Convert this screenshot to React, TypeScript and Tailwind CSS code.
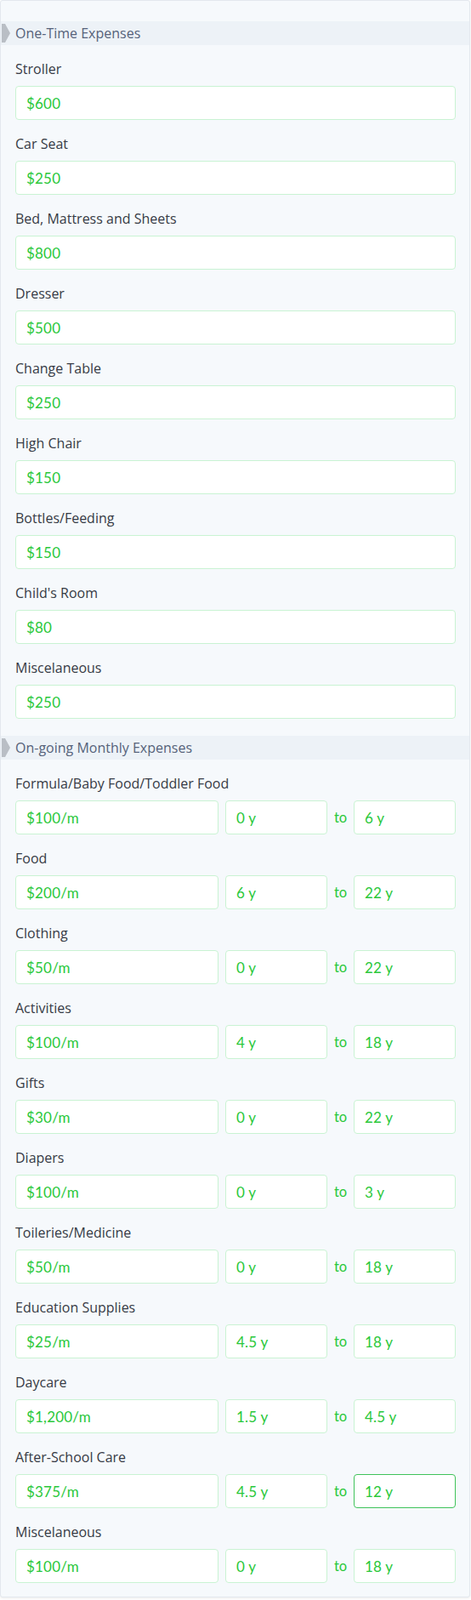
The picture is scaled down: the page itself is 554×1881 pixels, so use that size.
import { useState } from 'react';

interface OneTime {
  label: string;
  amount: string;
}

interface Monthly {
  label: string;
  amount: string;
  from: string;
  to: string;
}

const oneTime: OneTime[] = [
  { label: 'Stroller', amount: '$600' },
  { label: 'Car Seat', amount: '$250' },
  { label: 'Bed, Mattress and Sheets', amount: '$800' },
  { label: 'Dresser', amount: '$500' },
  { label: 'Change Table', amount: '$250' },
  { label: 'High Chair', amount: '$150' },
  { label: 'Bottles/Feeding', amount: '$150' },
  { label: "Child's Room", amount: '$80' },
  { label: 'Miscelaneous', amount: '$250' },
];

const monthly: Monthly[] = [
  { label: 'Formula/Baby Food/Toddler Food', amount: '$100/m', from: '0 y', to: '6 y' },
  { label: 'Food', amount: '$200/m', from: '6 y', to: '22 y' },
  { label: 'Clothing', amount: '$50/m', from: '0 y', to: '22 y' },
  { label: 'Activities', amount: '$100/m', from: '4 y', to: '18 y' },
  { label: 'Gifts', amount: '$30/m', from: '0 y', to: '22 y' },
  { label: 'Diapers', amount: '$100/m', from: '0 y', to: '3 y' },
  { label: 'Toileries/Medicine', amount: '$50/m', from: '0 y', to: '18 y' },
  { label: 'Education Supplies', amount: '$25/m', from: '4.5 y', to: '18 y' },
  { label: 'Daycare', amount: '$1,200/m', from: '1.5 y', to: '4.5 y' },
  { label: 'After-School Care', amount: '$375/m', from: '4.5 y', to: '12 y' },
  { label: 'Miscelaneous', amount: '$100/m', from: '0 y', to: '18 y' },
];

const inputBase =
  "h-10 rounded-[4px] border bg-white px-3 font-['Lato',_sans-serif] text-[17px] tracking-[0.2px] text-[#2ac83a] outline-none";

function SectionHeader({ title }: { title: string }) {
  return (
    <div className="flex h-[28px] items-center bg-[#edf2f7]">
      <svg width="11" height="22" viewBox="0 0 11 22" className="ml-[1px] shrink-0">
        <polygon points="0,0 4,0 10,11 4,22 0,22" fill="#b9bec5" />
      </svg>
      <span className="ml-[5px] text-[16px] text-[#56627a]">{title}</span>
    </div>
  );
}

function Label({ text }: { text: string }) {
  return <div className="pt-4 pb-2 text-[16px] leading-6 text-[#363b45]">{text}</div>;
}

export default function App() {
  const [focused] = useState('After-School Care');

  return (
    <div className="min-h-[1881px] bg-white font-['Open_Sans',_sans-serif]">
      <div className="w-[553px] rounded-[3px] border border-[#e3e8ee] bg-[#f6f9fc] pt-6 pb-4 shadow-[0_1px_3px_rgba(0,0,0,0.08)]">
        {/* One-time */}
        <SectionHeader title="One-Time Expenses" />
        <div className="pl-[17px] pr-[16px]">
          {oneTime.map((item) => (
            <div key={item.label}>
              <Label text={item.label} />
              <input
                className={`${inputBase} w-full border-[#c9f3d3]`}
                defaultValue={item.amount}
              />
            </div>
          ))}
        </div>

        {/* Monthly */}
        <div className="mt-5">
          <SectionHeader title="On-going Monthly Expenses" />
        </div>
        <div className="pl-[17px] pr-[16px]">
          {monthly.map((item) => (
            <div key={item.label + item.amount}>
              <Label text={item.label} />
              <div className="flex items-center">
                <input
                  className={`${inputBase} w-[239px] border-[#c9f3d3]`}
                  defaultValue={item.amount}
                />
                <input
                  className={`${inputBase} ml-2 w-[120px] border-[#c9f3d3]`}
                  defaultValue={item.from}
                />
                <span className="mx-2 w-[15px] font-['Lato',_sans-serif] text-[16.5px] text-[#2ac83a]">
                  to
                </span>
                <input
                  className={`${inputBase} w-[120px] ${
                    focused === item.label ? 'border-[#3fc35a]' : 'border-[#c9f3d3]'
                  }`}
                  defaultValue={item.to}
                />
              </div>
            </div>
          ))}
        </div>
      </div>
    </div>
  );
}
